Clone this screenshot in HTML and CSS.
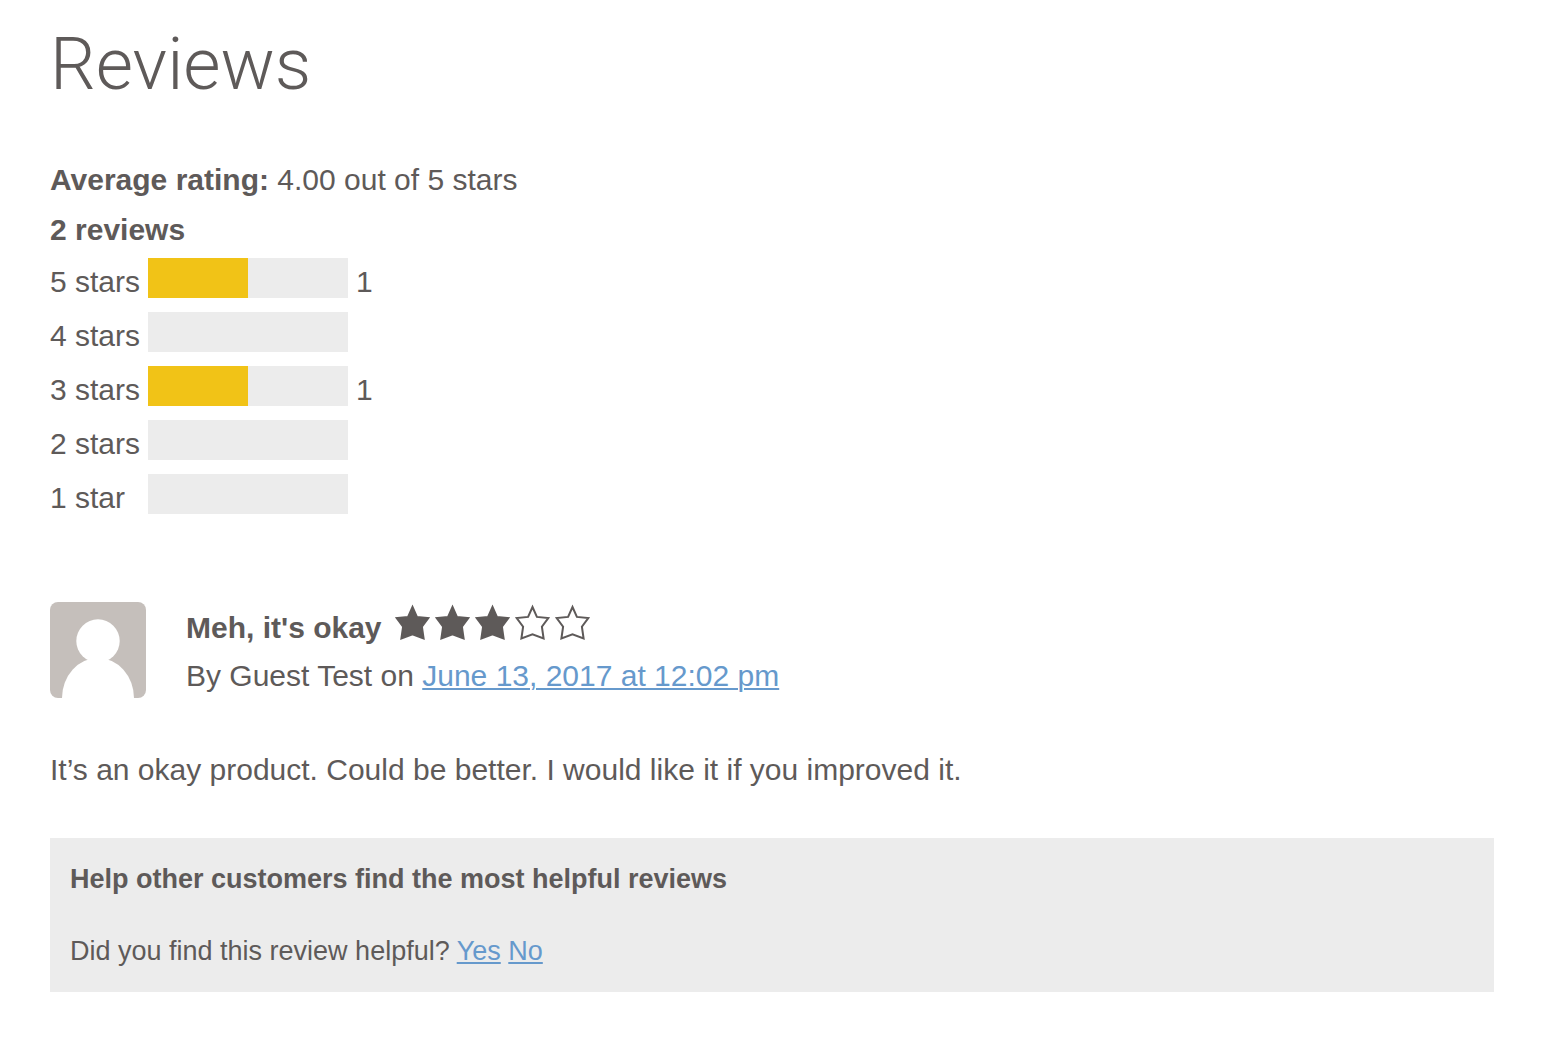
FILE: index.html
```html
<!DOCTYPE html>
<html lang="en">
<head>
  <meta charset="UTF-8">
  <meta name="viewport" content="width=device-width, initial-scale=1.0">
  <title>Reviews</title>
  <link rel="stylesheet" href="styles.css">
</head>
<body>
  <svg width="0" height="0" class="sprite" aria-hidden="true">
    <symbol id="star" viewBox="0 0 40 40">
      <path d="M20.5 3 L24.9 12.9 L36.3 14.1 L29.9 22.7 L31.6 34.5 L20.5 30.4 L9.4 34.5 L11.1 22.7 L4.7 14.1 L16.1 12.9 Z"/>
    </symbol>
  </svg>

  <main class="reviews">
    <h1>Reviews</h1>

    <!-- Rating summary -->
    <section class="summary">
      <p><strong>Average rating:</strong> 4.00 out of 5 stars</p>
      <p><strong>2 reviews</strong></p>
      <table class="histogram">
        <tbody>
          <tr>
            <th scope="row">5 stars</th>
            <td><div class="bar"><div class="bar-fill" style="width: 50%"></div></div></td>
            <td class="count">1</td>
          </tr>
          <tr>
            <th scope="row">4 stars</th>
            <td><div class="bar"></div></td>
            <td class="count"></td>
          </tr>
          <tr>
            <th scope="row">3 stars</th>
            <td><div class="bar"><div class="bar-fill" style="width: 50%"></div></div></td>
            <td class="count">1</td>
          </tr>
          <tr>
            <th scope="row">2 stars</th>
            <td><div class="bar"></div></td>
            <td class="count"></td>
          </tr>
          <tr>
            <th scope="row">1 star</th>
            <td><div class="bar"></div></td>
            <td class="count"></td>
          </tr>
        </tbody>
      </table>
    </section>

    <!-- Single review -->
    <article class="review">
      <header class="review-header">
        <svg class="avatar" viewBox="0 0 96 96" aria-hidden="true">
          <rect width="96" height="96" rx="8" fill="#c5bfbb"/>
          <circle cx="48" cy="39" r="21.7" fill="#fff"/>
          <path d="M12 96 A36 40 0 0 1 84 96 Z" fill="#fff"/>
        </svg>
        <div class="review-meta">
          <div class="review-title">
            <h2>Meh, it's okay</h2>
            <span class="stars" role="img" aria-label="3 out of 5 stars">
              <svg class="star full"><use href="#star"/></svg>
              <svg class="star full"><use href="#star"/></svg>
              <svg class="star full"><use href="#star"/></svg>
              <svg class="star"><use href="#star"/></svg>
              <svg class="star"><use href="#star"/></svg>
            </span>
          </div>
          <p>By Guest Test on <a href="#">June 13, 2017 at 12:02 pm</a></p>
        </div>
      </header>
      <p class="review-text">It’s an okay product. Could be better. I would like it if you improved it.</p>

      <div class="helpful">
        <h3>Help other customers find the most helpful reviews</h3>
        <p>Did you find this review helpful? <a href="#">Yes</a> <a href="#">No</a></p>
      </div>
    </article>
  </main>
</body>
</html>
```
FILE: styles.css
```css
/* Reset */
body, h1, h2, h3, p {
  margin: 0;
  padding: 0;
}
body {
  background-color: #fff;
  color: #5e5a59;
  font-family: "Helvetica Neue", "Liberation Sans", Arial, sans-serif;
  font-size: 30px;
  line-height: 50px;
}
a {
  color: #6699cc;
  text-decoration: underline;
  text-decoration-thickness: 2px;
  text-underline-offset: 2px;
}
.sprite {
  position: absolute;
}
.reviews {
  padding: 20px 56px 48px 50px;
}
h1 {
  font-family: Roboto, sans-serif;
  font-size: 72px;
  font-weight: 300;
  line-height: 90px;
  margin-bottom: 45px;
}

/* Rating summary */
.histogram {
  border-collapse: collapse;
  margin-top: 3px;
}
.histogram th,
.histogram td {
  height: 54px;
  padding: 0;
  font-weight: normal;
  line-height: 48px;
  text-align: left;
  vertical-align: top;
}
.histogram th {
  width: 98px;
}
.histogram .count {
  padding-left: 8px;
}
.bar {
  width: 200px;
  height: 40px;
  background-color: #ececec;
}
.bar-fill {
  height: 100%;
  background-color: #f1c317;
}

/* Single review */
.review {
  margin-top: 74px;
}
.review-header {
  display: flex;
  gap: 40px;
}
.avatar {
  width: 96px;
  height: 96px;
}
.review-meta {
  padding-top: 2px;
  line-height: 48px;
}
.review-title {
  display: flex;
  gap: 10px;
}
.review-title h2 {
  font-size: 30px;
}
.stars {
  display: flex;
}
.star {
  width: 40px;
  height: 40px;
  fill: none;
  stroke: #5e5a59;
  stroke-width: 2px;
}
.star.full {
  fill: #5e5a59;
}
.review-text {
  margin: 45px 0 43px;
}
.helpful {
  padding: 16px 20px;
  background-color: #ececec;
  font-size: 27px;
}
.helpful h3 {
  margin-bottom: 22px;
  font-size: 27px;
}
```
